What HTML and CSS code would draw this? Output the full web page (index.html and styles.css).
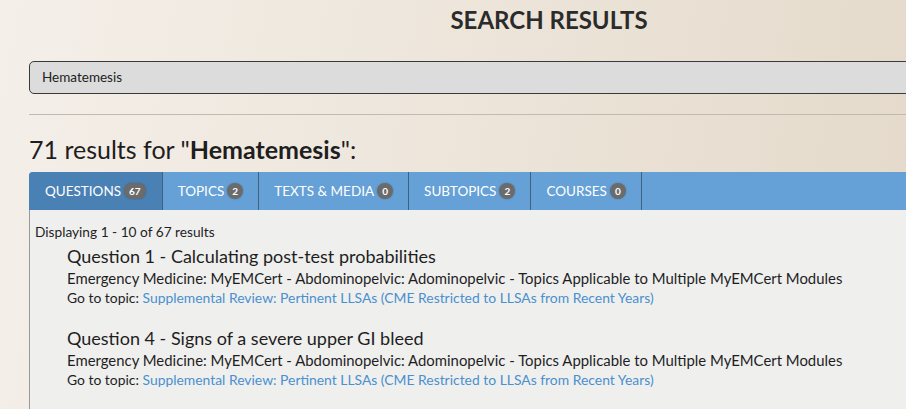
FILE: index.html
```html
<!DOCTYPE html>
<html>
<head>
<meta charset="utf-8">
<link rel="stylesheet" href="styles.css">
</head>
<body>
<div class="page">
  <h1 class="title">SEARCH RESULTS</h1>
  <div class="search">Hematemesis</div>
  <div class="rule"></div>
  <h2 class="count">71 results for "<b>Hematemesis</b>":</h2>
  <div class="tabs">
    <div class="tab active">QUESTIONS <span class="badge">67</span></div>
    <div class="tab">TOPICS <span class="badge">2</span></div>
    <div class="tab">TEXTS &amp; MEDIA <span class="badge">0</span></div>
    <div class="tab">SUBTOPICS <span class="badge">2</span></div>
    <div class="tab">COURSES <span class="badge">0</span></div>
  </div>
  <div class="panel">
    <div class="displaying">Displaying 1 - 10 of 67 results</div>
    <div class="result">
      <div class="q-title">Question 1 - Calculating post-test probabilities</div>
      <div class="q-path">Emergency Medicine: MyEMCert - Abdominopelvic: Adominopelvic - Topics Applicable to Multiple MyEMCert Modules</div>
      <div class="q-topic">Go to topic: <a href="#">Supplemental Review: Pertinent LLSAs (CME Restricted to LLSAs from Recent Years)</a></div>
    </div>
    <div class="result">
      <div class="q-title">Question 4 - Signs of a severe upper GI bleed</div>
      <div class="q-path">Emergency Medicine: MyEMCert - Abdominopelvic: Adominopelvic - Topics Applicable to Multiple MyEMCert Modules</div>
      <div class="q-topic">Go to topic: <a href="#">Supplemental Review: Pertinent LLSAs (CME Restricted to LLSAs from Recent Years)</a></div>
    </div>
  </div>
</div>
</body>
</html>
```

FILE: styles.css
```css
html, body {
  margin: 0;
  padding: 0;
  height: 100%;
  overflow: hidden;
}
body {
  background: linear-gradient(100deg, #f4efe9 0%, #ede5da 50%, #e4d9ca 100%);
  font-family: Lato, "Open Sans", sans-serif;
  color: #222;
}
.page {
  width: 1040px;
  padding-left: 29px;
}
.title {
  margin: 0;
  padding-top: 7px;
  height: 54px;
  box-sizing: border-box;
  text-align: center;
  font-size: 24px;
  font-weight: 700;
  color: #2b2b2b;
  line-height: 26px;
}
.search {
  height: 33px;
  box-sizing: border-box;
  border: 1px solid #3a3a3a;
  border-radius: 5px;
  background: #dcdcdc;
  font-size: 13.5px;
  line-height: 31px;
  padding-left: 12px;
  color: #222;
  margin-top: 7px;
}
.rule {
  height: 1px;
  background: #c2bab0;
  margin-top: 20px;
}
.count {
  margin: 0;
  padding-top: 19px;
  font-size: 25px;
  font-weight: 400;
  line-height: 30px;
  height: 57px;
  box-sizing: border-box;
  color: #1e1e1e;
}
.count b {
  font-weight: 700;
}
.tabs {
  display: flex;
  height: 38px;
  background: #65a1d6;
  border-radius: 4px 0 0 0;
  overflow: hidden;
}
.tab {
  display: flex;
  align-items: center;
  padding: 0 15px;
  color: #fff;
  font-size: 13.5px;
  border-right: 1px solid #40607c;
}
.tab.active {
  background: #4a81b4;
  padding: 0 16px 0 16px;
}
.badge {
  display: inline-block;
  margin-left: 3px;
  background: #6b6b6b;
  color: #fff;
  font-size: 10px;
  font-weight: 700;
  border-radius: 8px;
  min-width: 16px;
  height: 16px;
  line-height: 16px;
  text-align: center;
  padding: 0 3px;
  box-sizing: border-box;
  box-shadow: 0 0 2px rgba(0,0,0,0.25);
}
.tab.active .badge {
  padding: 0 5px;
}
.panel {
  background: #efefee;
  border-left: 1px solid #9a9a9a;
  padding: 14px 0 30px 5px;
  height: 300px;
}
.displaying {
  font-size: 13.7px;
  line-height: 16px;
  color: #1e1e1e;
  margin-bottom: 5px;
}
.result {
  padding-left: 32px;
  margin-bottom: 21px;
}
.q-title {
  font-size: 18px;
  line-height: 23px;
  color: #1e1e1e;
}
.q-path {
  font-size: 14.9px;
  line-height: 21px;
  color: #1e1e1e;
}
.q-topic {
  font-size: 13.9px;
  line-height: 17px;
  color: #1e1e1e;
}
.q-topic a {
  color: #4a8fcf;
  text-decoration: none;
}
```
